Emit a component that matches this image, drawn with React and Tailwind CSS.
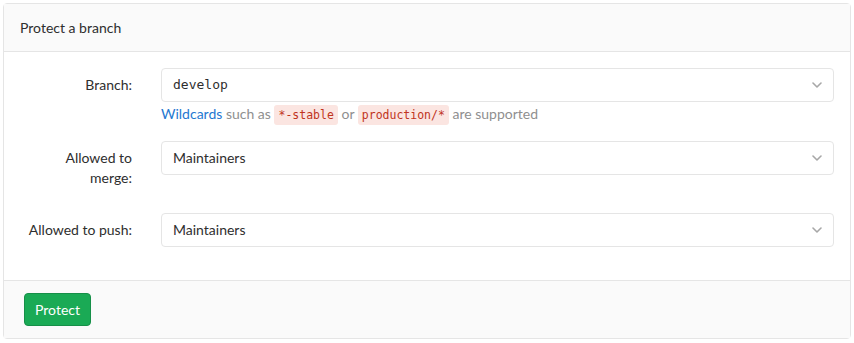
const FONT = { fontFamily: 'Lato, "Noto Sans", Arial, sans-serif' };
const MONO = { fontFamily: '"DejaVu Sans Mono", "Liberation Mono", monospace' };

function Chevron() {
  return (
    <svg width="10" height="6" viewBox="0 0 10 6" className="text-[#a7a7a7]">
      <path d="M1 1l4 4 4-4" fill="none" stroke="currentColor" strokeWidth="1.6" strokeLinecap="round" strokeLinejoin="round" />
    </svg>
  );
}

function SelectBox({ value, mono }) {
  return (
    <div className="flex h-[34px] items-center justify-between rounded-[4px] border border-[#e5e5e5] bg-white pl-[11px] pr-[11px]">
      <span className={mono ? "text-[13px] leading-[20px] text-[#2e2e2e]" : "text-[14px] leading-[20px] text-[#2e2e2e]"} style={mono ? MONO : FONT}>
        {value}
      </span>
      <Chevron />
    </div>
  );
}

function Code({ children }) {
  return (
    <code className="rounded-[3px] bg-[#fbe5e1] px-[4px] py-[3px] text-[11.5px] text-[#c0341d]" style={MONO}>
      {children}
    </code>
  );
}

export default function App() {
  return (
    <div className="bg-white p-[3px]" style={FONT}>
      <div className="rounded-[4px] border border-[#e5e5e5] text-[#2e2e2e]">
        <div className="flex h-[48px] items-center border-b border-[#e5e5e5] bg-[#fafafa] px-[16px] text-[14px]">
          Protect a branch
        </div>

        <div className="px-[16px] pt-[16px] pb-[33px]">
          <div className="flex">
            <label className="w-[112px] shrink-0 pt-[7px] text-right text-[14px] leading-[20px]">Branch:</label>
            <div className="ml-[29px] flex-1">
              <SelectBox value="develop" mono />
              <p className="mt-[2px] h-[20px] text-[14px] leading-[20px] text-[#8f8f8f]">
                <span className="text-[#1f78d1]">Wildcards</span> such as <Code>*-stable</Code> or{" "}
                <Code>production/*</Code> are supported
              </p>
            </div>
          </div>

          <div className="mt-[17px] flex">
            <label className="w-[112px] shrink-0 pt-[7px] text-right text-[14px] leading-[20px]">
              Allowed to
              <br />
              merge:
            </label>
            <div className="ml-[29px] flex-1">
              <SelectBox value="Maintainers" />
            </div>
          </div>

          <div className="mt-[25px] flex">
            <label className="w-[112px] shrink-0 pt-[7px] text-right text-[14px] leading-[20px]">Allowed to push:</label>
            <div className="ml-[29px] flex-1">
              <SelectBox value="Maintainers" />
            </div>
          </div>
        </div>

        <div className="border-t border-[#e5e5e5] bg-[#fafafa] px-[20px] py-[12px]">
          <button className="h-[33px] rounded-[4px] border border-[#168f48] bg-[#1aaa55] px-[10px] text-[14px] leading-[20px] text-white">
            Protect
          </button>
        </div>
      </div>
    </div>
  );
}
